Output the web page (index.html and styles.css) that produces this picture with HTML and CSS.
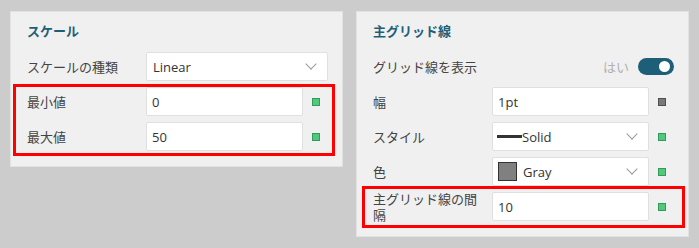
FILE: index.html
```html
<!DOCTYPE html>
<html lang="ja">

<head>
    <meta charset="UTF-8">
    <meta name="viewport" content="width=device-width, initial-scale=1.0">
    <title>軸の設定</title>
    <link rel="stylesheet" href="styles.css">
</head>

<body>
    <div class="panels">
        <!-- スケール -->
        <div class="panel">
            <h3 class="panel-title">スケール</h3>
            <div class="row">
                <label class="row-label">スケールの種類</label>
                <div class="field select wide">
                    <span class="field-text">Linear</span>
                    <span class="chevron"></span>
                </div>
            </div>
            <div class="highlight hl-left">
                <div class="row">
                    <label class="row-label">最小値</label>
                    <div class="field"><span class="field-text">0</span></div>
                    <span class="indicator"><span class="dot green"></span></span>
                </div>
                <div class="row">
                    <label class="row-label">最大値</label>
                    <div class="field"><span class="field-text">50</span></div>
                    <span class="indicator"><span class="dot green"></span></span>
                </div>
            </div>
        </div>

        <!-- 主グリッド線 -->
        <div class="panel">
            <h3 class="panel-title">主グリッド線</h3>
            <div class="row">
                <label class="row-label">グリッド線を表示</label>
                <div class="toggle-wrap">
                    <span class="toggle-text">はい</span>
                    <span class="toggle"><span class="knob"></span></span>
                </div>
            </div>
            <div class="row">
                <label class="row-label">幅</label>
                <div class="field"><span class="field-text">1pt</span></div>
                <span class="indicator"><span class="dot gray"></span></span>
            </div>
            <div class="row">
                <label class="row-label">スタイル</label>
                <div class="field select">
                    <span class="line-swatch"></span>
                    <span class="field-text">Solid</span>
                    <span class="chevron"></span>
                </div>
                <span class="indicator"><span class="dot green"></span></span>
            </div>
            <div class="row">
                <label class="row-label">色</label>
                <div class="field select">
                    <span class="color-swatch"></span>
                    <span class="field-text">Gray</span>
                    <span class="chevron"></span>
                </div>
                <span class="indicator"><span class="dot green"></span></span>
            </div>
            <div class="highlight hl-right">
                <div class="row">
                    <label class="row-label two-line">主グリッド線の間隔</label>
                    <div class="field"><span class="field-text">10</span></div>
                    <span class="indicator"><span class="dot green"></span></span>
                </div>
            </div>
        </div>
    </div>
</body>

</html>
```

FILE: styles.css
```css
body {
    font-family: "Open Sans", "Noto Sans CJK JP", sans-serif;
    font-size: 13px;
    margin: 0;
    padding: 11px 10px;
    background-color: #cccccc;
    color: #444;
}

.panels {
    display: flex;
    align-items: flex-start;
    gap: 13px;
}

.panel {
    width: 333px;
    box-sizing: border-box;
    background-color: #f0f0f0;
    border: 1px solid #e2e2e2;
    padding: 9px 14px 15px 16px;
    display: flex;
    flex-direction: column;
    gap: 6px;
}

.panel-title {
    margin: 0 0 5px 0;
    font-size: 13px;
    font-weight: bold;
    line-height: 20px;
    color: #1e5f78;
}

.row {
    display: flex;
    align-items: center;
    height: 29px;
}

.row-label {
    width: 119px;
    flex-shrink: 0;
    line-height: 16px;
}

.two-line {
    width: 110px;
    margin-right: 9px;
}

.field {
    flex: 1;
    height: 29px;
    box-sizing: border-box;
    background-color: #fff;
    border: 1px solid #e0e0e0;
    border-radius: 2px;
    display: flex;
    align-items: center;
    padding: 0 5px;
    color: #333;
}

.field-text {
    flex: 1;
}

.select {
    padding-left: 3px;
    padding-right: 12px;
}

.select.wide .field-text {
    margin-left: 3px;
}

.chevron {
    width: 7px;
    height: 7px;
    border-right: 1px solid #999;
    border-bottom: 1px solid #999;
    transform: rotate(45deg);
    margin-top: -5px;
}

.indicator {
    width: 25px;
    flex-shrink: 0;
    display: flex;
    padding-left: 9px;
    box-sizing: border-box;
}

.dot {
    width: 8px;
    height: 8px;
    box-sizing: border-box;
}

.dot.green {
    background-color: #52c77e;
    border: 1px solid #2f9d59;
}

.dot.gray {
    background-color: #7a7a7a;
    border: 1px solid #4f4f4f;
}

.line-swatch {
    width: 25px;
    height: 3px;
    background-color: #333;
    margin-left: 1px;
}

.color-swatch {
    width: 19px;
    height: 19px;
    box-sizing: border-box;
    background-color: #808080;
    border: 1px solid #333;
    margin: 0 6px 0 2px;
}

.toggle-wrap {
    flex: 1;
    display: flex;
    justify-content: flex-end;
    align-items: center;
    gap: 9px;
}

.toggle-text {
    color: #b0b0b0;
}

.toggle {
    width: 36px;
    height: 17px;
    border-radius: 9px;
    background-color: #1d5f78;
    display: flex;
    align-items: center;
    justify-content: flex-end;
    padding-right: 4px;
    box-sizing: border-box;
}

.knob {
    width: 11px;
    height: 11px;
    border-radius: 50%;
    background-color: #fff;
}

/* red frames drawn over the highlighted rows */
.highlight {
    position: relative;
    display: flex;
    flex-direction: column;
    gap: 6px;
}

.highlight::after {
    content: '';
    position: absolute;
    border: 3px solid #ff0000;
}

.hl-left::after {
    top: -3px;
    bottom: -5px;
    left: -14px;
    right: -7px;
}

.hl-right::after {
    top: -6px;
    bottom: -7px;
    left: -11px;
    right: -11px;
}
```
